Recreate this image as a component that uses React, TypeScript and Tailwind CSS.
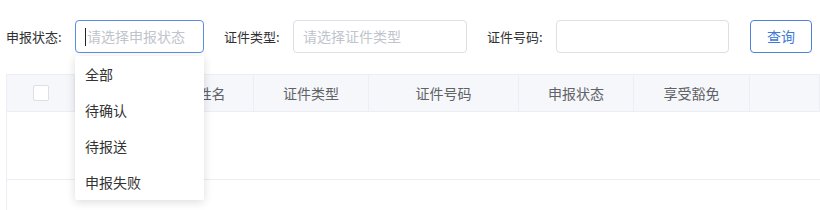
import React from 'react';

const font = { fontFamily: '"Microsoft YaHei", "Noto Sans CJK SC", sans-serif' };

// 第二列被下拉框遮住，看不到表头文字
const columns = [
  { label: '', w: 'w-[68px]', checkbox: true },
  { label: '', w: 'w-[95px]' },
  { label: '姓名', w: 'w-[84px]' },
  { label: '证件类型', w: 'w-[115px]' },
  { label: '证件号码', w: 'w-[150px]' },
  { label: '申报状态', w: 'w-[115px]' },
  { label: '享受豁免', w: 'w-[116px]' },
  { label: '', w: 'flex-1' },
];

const options = ['全部', '待确认', '待报送', '申报失败'];

export default function App() {
  return (
    <div className="relative h-[210px] w-[820px] overflow-hidden bg-white text-[14px]" style={font}>
      {/* 查询条件 */}
      <div className="flex h-[74px] items-start pl-[6px] pt-[20px]">
        <span className="mt-[7px] w-[69px] text-[13px] text-[#303133]">申报状态:</span>
        <div className="relative w-[129px]">
          <div className="flex h-[33px] items-center rounded-[4px] border border-[#5b8de3] pl-[9px] text-[#c0c4cc]">
            <span className="mr-[1px] h-[18px] w-px bg-[#222]" />
            <span>请选择申报状态</span>
          </div>
          {/* 下拉选项 */}
          <ul className="absolute left-0 top-[36px] z-10 w-[129px] rounded-[2px] bg-white shadow-[0_2px_10px_rgba(0,0,0,0.14)]">
            {options.map((o) => (
              <li key={o} className="flex h-[36px] items-center pl-[10px] text-[#333]">
                {o}
              </li>
            ))}
          </ul>
        </div>
        <span className="ml-[20px] mt-[7px] w-[69px] text-[13px] text-[#303133]">证件类型:</span>
        <div className="flex h-[33px] w-[174px] items-center rounded-[4px] border border-[#dcdfe6] pl-[9px] text-[#c0c4cc]">
          请选择证件类型
        </div>
        <span className="ml-[20px] mt-[7px] w-[69px] text-[13px] text-[#303133]">证件号码:</span>
        <div className="h-[33px] w-[173px] rounded-[4px] border border-[#dcdfe6]" />
        <button className="ml-[21px] flex h-[33px] w-[62px] items-center justify-center rounded-[4px] border border-[#4d82dc] text-[#3f78d8]">
          查询
        </button>
      </div>

      {/* 表格 */}
      <div className="ml-[6px] border-l border-[#ebeef5]">
        <div className="flex h-[38px] border-y border-[#ebeef5] bg-[#f5f7fa] text-[#606266]">
          {columns.map((c, i) => (
            <div
              key={i}
              className={`${c.w} flex shrink-0 items-center justify-center border-r border-[#ebeef5]`}
            >
              {c.checkbox ? (
                <span className="h-[16px] w-[16px] rounded-[2px] border border-[#dcdfe6] bg-white" />
              ) : (
                c.label
              )}
            </div>
          ))}
        </div>
        <div className="h-[68px] border-b border-[#ebeef5]" />
        <div className="h-[40px]" />
      </div>
    </div>
  );
}
